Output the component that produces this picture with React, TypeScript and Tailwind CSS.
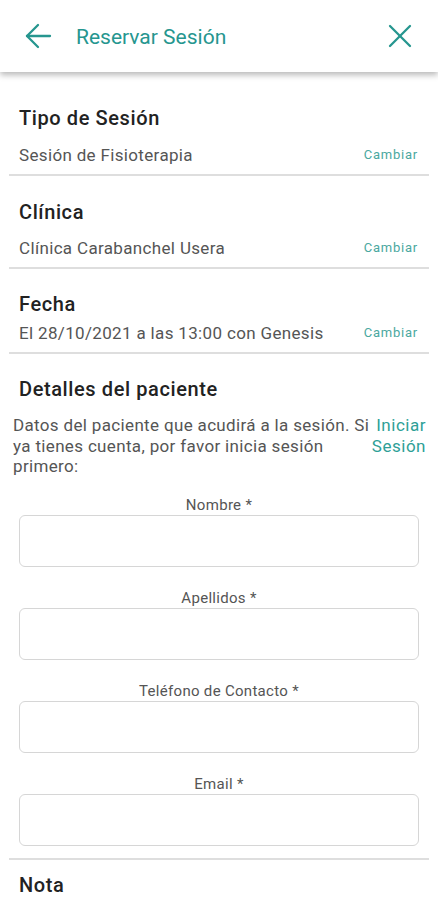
const sections = [
  { title: "Tipo de Sesión", value: "Sesión de Fisioterapia", pt: "pt-[34px]", mt: "mt-[14px]" },
  { title: "Clínica", value: "Clínica Carabanchel Usera", pt: "pt-[24px]", mt: "mt-[13px]" },
  { title: "Fecha", value: "El 28/10/2021 a las 13:00 con Genesis", pt: "pt-[23px]", mt: "mt-[6px]" },
];

const fields = ["Nombre *", "Apellidos *", "Teléfono de Contacto *", "Email *"];

function SectionTitle({ children }: { children: string }) {
  return (
    <h2 className="text-[20px] leading-[24px] font-medium tracking-[0.03em] text-[#222]">{children}</h2>
  );
}

export default function App() {
  return (
    <div className="min-h-screen bg-white font-['Roboto',sans-serif]">
      <header className="h-[72px] flex items-center justify-between pl-[25px] pr-[26px] bg-white shadow-[0_3px_6px_rgba(0,0,0,0.28)] relative z-10">
        <div className="flex items-center">
          <svg width="28" height="28" viewBox="0 0 28 28" fill="none" stroke="#26968f" strokeWidth="2.3" strokeLinecap="round" strokeLinejoin="round">
            <path d="M2 14H25" />
            <path d="M13 3L2 14L13 25" />
          </svg>
          <span className="ml-[23px] mt-[4px] text-[21px] text-[#26968f]">Reservar Sesión</span>
        </div>
        <svg width="24" height="24" viewBox="0 0 24 24" fill="none" stroke="#26968f" strokeWidth="2.3" strokeLinecap="round">
          <path d="M2 2L22 22" />
          <path d="M22 2L2 22" />
        </svg>
      </header>

      <main>
        {sections.map((s) => (
          <div key={s.title} className={`mx-[9px] border-b-2 border-[#dedede] pl-[10px] pr-[11px] pb-[8px] ${s.pt}`}>
            <SectionTitle>{s.title}</SectionTitle>
            <div className={`flex items-center justify-between ${s.mt}`}>
              <span className="text-[17px] leading-[22px] tracking-[0.02em] text-[#555]">{s.value}</span>
              <button className="text-[13px] leading-[22px] tracking-[0.06em] text-[#4aa8a0]">Cambiar</button>
            </div>
          </div>
        ))}

        <div className="mx-[9px] border-b-2 border-[#dedede] pb-[12px]">
          <div className="pt-[23px] pl-[10px]">
            <SectionTitle>Detalles del paciente</SectionTitle>
          </div>
          <div className="mt-[14px] pl-[4px] pr-[3px] flex items-start justify-between">
            <p className="whitespace-nowrap text-[17px] leading-[20.5px] tracking-[0.02em] text-[#555]">
              Datos del paciente que acudirá a la sesión. Si
              <br />
              ya tienes cuenta, por favor inicia sesión
              <br />
              primero:
            </p>
            <button className="shrink-0 whitespace-nowrap text-[17px] leading-[20.5px] tracking-[0.03em] text-[#2e9f97] text-right">
              Iniciar
              <br />
              Sesión
            </button>
          </div>

          <div className="mt-[19px] px-[10px] flex flex-col gap-[22px]">
            {fields.map((f) => (
              <label key={f} className="flex flex-col items-center">
                <span className="text-[15px] leading-[19px] tracking-[0.02em] text-[#555]">{f}</span>
                <input className="w-full h-[52px] rounded-[6px] border border-[#d6d6d6] outline-none px-3" />
              </label>
            ))}
          </div>
        </div>

        <div className="mx-[9px] pl-[10px] pt-[13px]">
          <SectionTitle>Nota</SectionTitle>
        </div>
      </main>
    </div>
  );
}
